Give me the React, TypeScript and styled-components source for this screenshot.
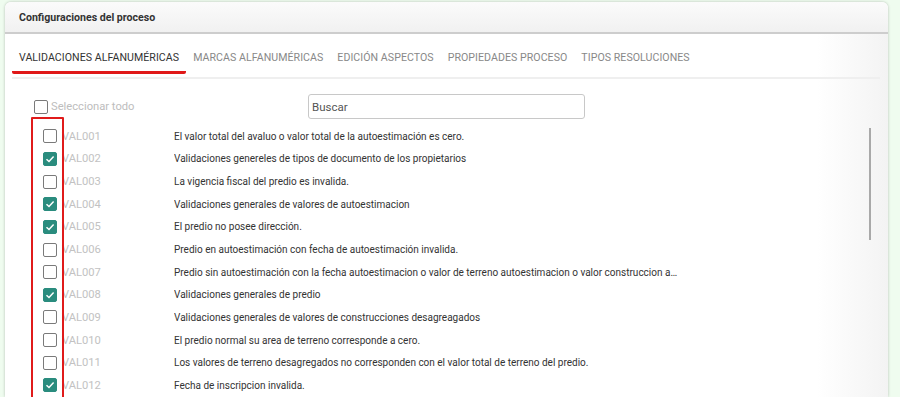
import React from 'react';
import styled, { createGlobalStyle } from 'styled-components';

const GlobalStyle = createGlobalStyle`
  html, body {
    margin: 0;
    padding: 0;
    height: 397px;
    overflow: hidden;
    background: #effcef;
    font-family: Roboto, "Liberation Sans", Arial, sans-serif;
  }
`;

const Card = styled.div`
  margin: 2px 12px 0 5px;
  border-radius: 6px 6px 0 0;
  background: #fff;
  box-shadow: 0 0 3px rgba(0, 0, 0, 0.25);
  overflow: hidden;
`;

const Header = styled.div`
  height: 30px;
  padding: 0 14px;
  display: flex;
  align-items: center;
  background: linear-gradient(to bottom, #fbfbfb, #f1f1f1);
  border-bottom: 2px solid #cdcdcd;
  font-size: 10.6px;
  font-weight: 700;
  color: #333;
`;

const Body = styled.div`
  position: relative;
  padding: 0 8px 0 7px;
  height: 363px;
  background: linear-gradient(to right, #fff 92%, #f3f3f3 100%);
`;

const TabBar = styled.div`
  display: flex;
  padding-bottom: 3px;
  border-bottom: 2px solid #efefef;
`;

const Tab = styled.div<{ $active?: boolean }>`
  padding: 17px 7px 6px;
  line-height: 14px;
  font-size: 10.6px;
  letter-spacing: 0.05px;
  color: ${p => (p.$active ? '#333' : '#888')};
  border-bottom: 3px solid ${p => (p.$active ? '#e01818' : 'transparent')};
  border-radius: 0 0 2px 2px;
  white-space: nowrap;
`;

const Toolbar = styled.div`
  display: flex;
  align-items: center;
  margin-top: 15px;
  height: 25px;
`;

const SelectAll = styled.label`
  display: flex;
  align-items: center;
  gap: 3px;
  width: 274px;
  padding-left: 22px;
  font-size: 11.2px;
  color: #bdbdbd;
`;

const Search = styled.input`
  box-sizing: border-box;
  width: 277px;
  height: 25px;
  padding: 0 3px;
  border: 1px solid #c8c8c8;
  border-radius: 3px;
  font-family: inherit;
  font-size: 11.5px;
  color: #333;
  outline: none;
  &::placeholder {
    color: #555;
  }
`;

const List = styled.div`
  margin-top: 6px;
`;

const Row = styled.div`
  display: flex;
  align-items: center;
  height: 22.65px;
  padding-left: 31px;
`;

const Box = styled.span<{ $checked?: boolean }>`
  box-sizing: border-box;
  flex: none;
  width: 14px;
  height: 14px;
  border-radius: 2px;
  border: 1.5px solid ${p => (p.$checked ? '#2a8c7e' : '#7a7a7a')};
  background: ${p => (p.$checked ? '#2a8c7e' : '#fff')};
  display: flex;
  align-items: center;
  justify-content: center;
`;

const Code = styled.span`
  width: 112px;
  margin-left: 5px;
  font-size: 11.2px;
  color: #c2c2c2;
`;

const Desc = styled.span`
  width: 506px;
  font-size: 10px;
  color: #333;
  white-space: nowrap;
  overflow: hidden;
  text-overflow: ellipsis;
`;

const ScrollThumb = styled.div`
  position: absolute;
  left: 864px;
  top: 94px;
  width: 2px;
  height: 112px;
  background: #a9a9a9;
`;

const Highlight = styled.div`
  position: absolute;
  left: 26px;
  top: 83px;
  width: 29px;
  height: 280px;
  border: 2px solid #e01b1b;
  border-radius: 1px;
`;

const Check = () => (
  <svg width="10" height="10" viewBox="0 0 10 10">
    <path d="M1.5 5.2 L4 7.5 L8.6 2.6" fill="none" stroke="#fff" strokeWidth="1.5" />
  </svg>
);

const Checkbox = ({ checked }: { checked?: boolean }) => (
  <Box $checked={checked}>{checked && <Check />}</Box>
);

const tabs = [
  'VALIDACIONES ALFANUMÉRICAS',
  'MARCAS ALFANUMÉRICAS',
  'EDICIÓN ASPECTOS',
  'PROPIEDADES PROCESO',
  'TIPOS RESOLUCIONES',
];

const rows = [
  { code: 'VAL001', checked: false, text: 'El valor total del avaluo o valor total de la autoestimación es cero.' },
  { code: 'VAL002', checked: true, text: 'Validaciones genereles de tipos de documento de los propietarios' },
  { code: 'VAL003', checked: false, text: 'La vigencia fiscal del predio es invalida.' },
  { code: 'VAL004', checked: true, text: 'Validaciones generales de valores de autoestimacion' },
  { code: 'VAL005', checked: true, text: 'El predio no posee dirección.' },
  { code: 'VAL006', checked: false, text: 'Predio en autoestimación con fecha de autoestimación invalida.' },
  { code: 'VAL007', checked: false, text: 'Predio sin autoestimación con la fecha autoestimacion o valor de terreno autoestimacion o valor construccion autoestimacion' },
  { code: 'VAL008', checked: true, text: 'Validaciones generales de predio' },
  { code: 'VAL009', checked: false, text: 'Validaciones generales de valores de construcciones desagreagados' },
  { code: 'VAL010', checked: false, text: 'El predio normal su area de terreno corresponde a cero.' },
  { code: 'VAL011', checked: false, text: 'Los valores de terreno desagregados no corresponden con el valor total de terreno del predio.' },
  { code: 'VAL012', checked: true, text: 'Fecha de inscripcion invalida.' },
];

export default function App() {
  return (
    <>
      <GlobalStyle />
      <Card>
        <Header>Configuraciones del proceso</Header>
        <Body>
          <TabBar>
            {tabs.map((t, i) => (
              <Tab key={t} $active={i === 0}>{t}</Tab>
            ))}
          </TabBar>
          <Toolbar>
            <SelectAll>
              <Checkbox />
              Seleccionar todo
            </SelectAll>
            <Search placeholder="Buscar" />
          </Toolbar>
          <List>
            {rows.map(r => (
              <Row key={r.code}>
                <Checkbox checked={r.checked} />
                <Code>{r.code}</Code>
                <Desc>{r.text}</Desc>
              </Row>
            ))}
          </List>
          <ScrollThumb />
          <Highlight />
        </Body>
      </Card>
    </>
  );
}
